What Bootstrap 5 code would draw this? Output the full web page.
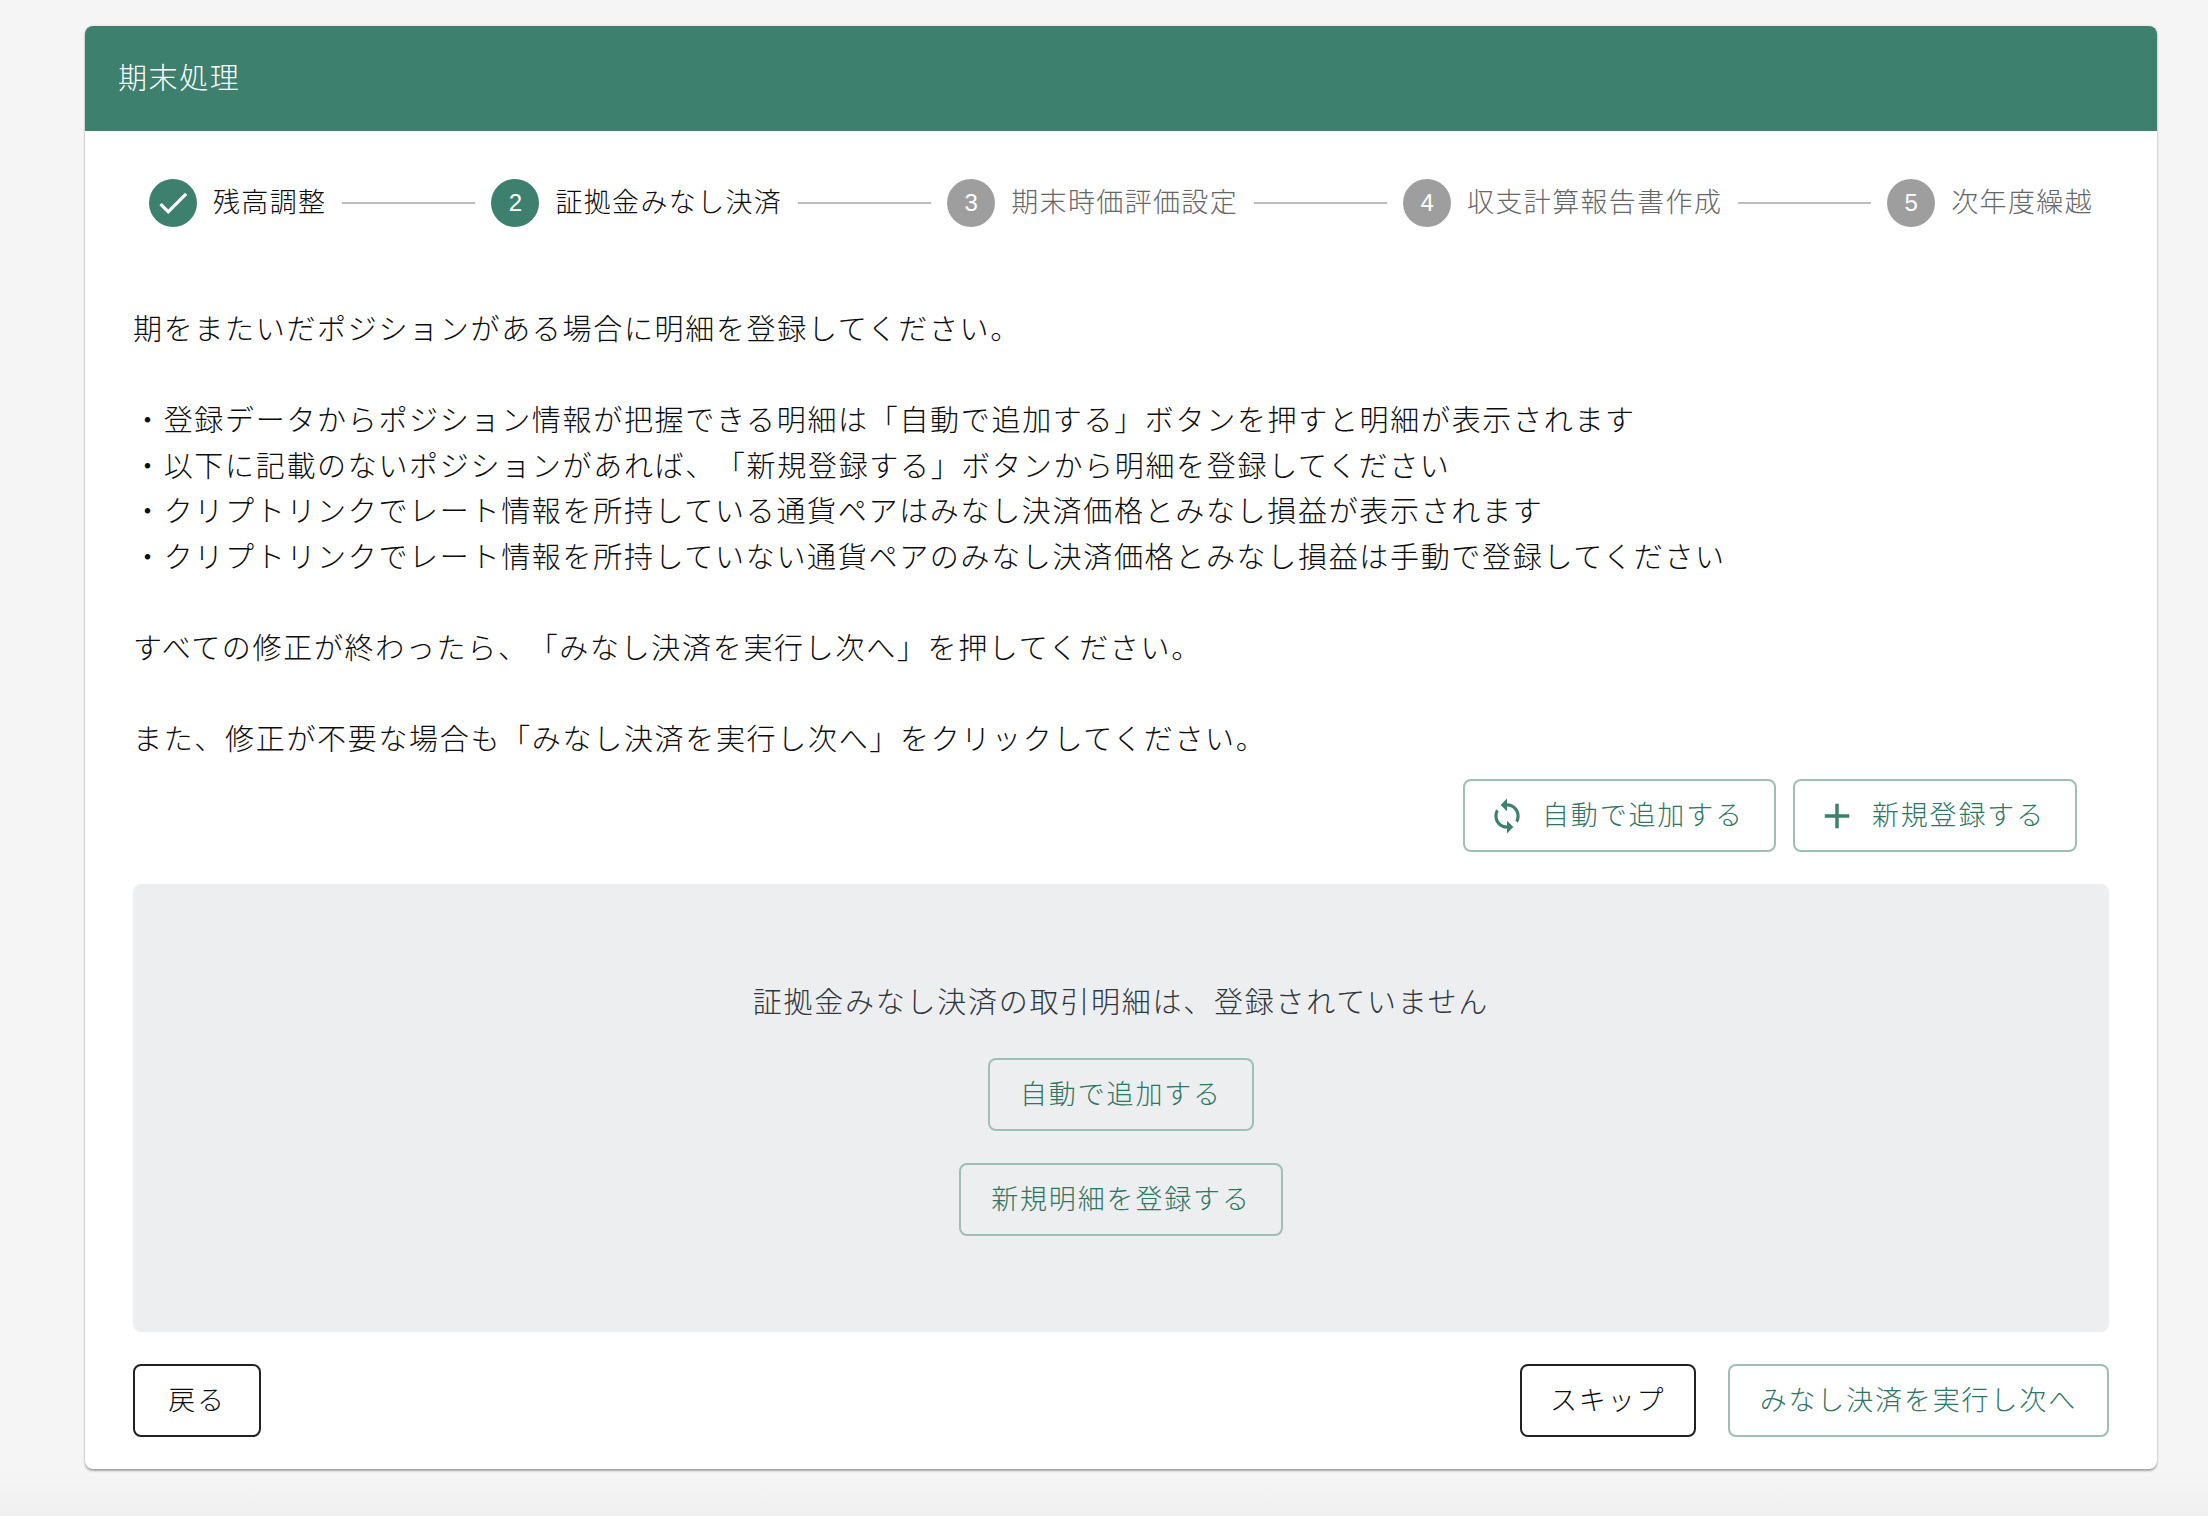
<!DOCTYPE html>
<html lang="ja">
<head>
<meta charset="utf-8">
<title>期末処理</title>
<link href="https://cdn.jsdelivr.net/npm/bootstrap@5.3.0/dist/css/bootstrap.min.css" rel="stylesheet">
<style>
:root { --main:#3d806d; --main-soft:#9ebfb6; }
html, body { height:100%; }
body { font-family:"Noto Sans CJK JP","Liberation Sans",sans-serif; font-weight:300; text-spacing-trim:space-all; background:linear-gradient(#f5f5f5 0, #f5f5f5 1470px, #f0f0f0 1516px); color:#0c0c0c; padding:26px 51px 0 85px; overflow:hidden; }
.sheet { background:#fff; border-radius:8px; box-shadow:0 2px 2px rgba(0,0,0,.3), 0 0 3px rgba(0,0,0,.12); height:1443px; overflow:hidden; }
.sheet-head { background:var(--main); color:#fff; height:105px; padding:0 0 4px 33px; font-size:29px; letter-spacing:1.6px; }
.sheet-main { padding:48px 48px 32px; }
.steps { padding:0 16px; height:48px; margin-bottom:78px; gap:16px; font-size:27px; letter-spacing:1.35px; }
.step-dot { width:48px; height:48px; border-radius:50%; background:#9e9e9e; color:#fff; font-size:24px; font-family:"Liberation Sans",sans-serif; letter-spacing:0; flex:none; }
.step-dot.on { background:var(--main); }
.step-text { color:#666; white-space:nowrap; padding-bottom:4px; }
.step-text.on { color:#0c0c0c; }
.step-line { flex:1 1 0; height:2px; background:#bdbdbd; }
.intro { font-size:29px; line-height:45.5px; letter-spacing:1.68px; margin:0 0 19px; white-space:nowrap; }
.act { height:73px; border-radius:8px; border:2px solid var(--main-soft); color:#2f7561; background:transparent; font-size:27px; font-weight:300; letter-spacing:1.85px; padding:0 30px 4px; line-height:1; white-space:nowrap; }
.act:hover { color:#2f7561; border-color:var(--main); background:transparent; }
.act.plain { border-color:#212121; color:#0c0c0c; }
.act svg { fill:var(--main); flex:none; }
.ic-sync { width:38px; height:38px; margin:0 1px; }
.ic-plus { width:42px; height:42px; margin:0 -1px; }
.act-icon { padding:0 30px 0 22px; gap:15px; }
.act-label { padding-bottom:4px; }
.top-acts { gap:17px; padding-right:32px; margin-bottom:32px; }
.empty-box { background:#edeef0; border-radius:8px; height:448px; padding-top:93px; color:#2f363c; font-size:29px; letter-spacing:1.75px; margin-bottom:32px; }
.empty-msg { line-height:46px; margin-bottom:35px; }
.empty-box .act { margin-bottom:32px; }
.foot-gap { gap:32px; }
.btn-back { width:128px; padding:0 0 4px; }
.btn-skip { width:176px; padding:0 0 4px; }
</style>
</head>
<body>
<div class="sheet">
  <div class="sheet-head d-flex align-items-center">期末処理</div>
  <div class="sheet-main">
    <div class="steps d-flex align-items-center">
      <span class="step-dot on d-flex align-items-center justify-content-center"><svg width="38" height="38" viewBox="0 0 24 24" fill="#fff"><path d="M9 16.17L4.83 12l-1.42 1.41L9 19 21 7l-1.41-1.41z"/></svg></span>
      <span class="step-text on">残高調整</span>
      <span class="step-line"></span>
      <span class="step-dot on d-flex align-items-center justify-content-center">2</span>
      <span class="step-text on">証拠金みなし決済</span>
      <span class="step-line"></span>
      <span class="step-dot d-flex align-items-center justify-content-center">3</span>
      <span class="step-text">期末時価評価設定</span>
      <span class="step-line"></span>
      <span class="step-dot d-flex align-items-center justify-content-center">4</span>
      <span class="step-text">収支計算報告書作成</span>
      <span class="step-line"></span>
      <span class="step-dot d-flex align-items-center justify-content-center">5</span>
      <span class="step-text">次年度繰越</span>
    </div>
    <p class="intro">期をまたいだポジションがある場合に明細を登録してください。<br><br>・登録データからポジション情報が把握できる明細は「自動で追加する」ボタンを押すと明細が表示されます<br>・以下に記載のないポジションがあれば、「新規登録する」ボタンから明細を登録してください<br>・クリプトリンクでレート情報を所持している通貨ペアはみなし決済価格とみなし損益が表示されます<br>・クリプトリンクでレート情報を所持していない通貨ペアのみなし決済価格とみなし損益は手動で登録してください<br><br>すべての修正が終わったら、「みなし決済を実行し次へ」を押してください。<br><br>また、修正が不要な場合も「みなし決済を実行し次へ」をクリックしてください。</p>
    <div class="top-acts d-flex justify-content-end">
      <button type="button" class="btn act act-icon d-flex align-items-center"><svg class="ic-sync" viewBox="0 0 24 24"><path d="M12 4V1L8 5l4 4V6c3.31 0 6 2.69 6 6 0 1.01-.25 1.97-.7 2.8l1.46 1.46C19.54 15.03 20 13.57 20 12c0-4.42-3.58-8-8-8zm0 14c-3.31 0-6-2.69-6-6 0-1.01.25-1.97.7-2.8L5.24 7.74C4.46 8.97 4 10.43 4 12c0 4.42 3.58 8 8 8v3l4-4-4-4v3z"/></svg><span class="act-label">自動で追加する</span></button>
      <button type="button" class="btn act act-icon d-flex align-items-center"><svg class="ic-plus" viewBox="0 0 24 24"><path d="M19 13h-6v6h-2v-6H5v-2h6V5h2v6h6v2z"/></svg><span class="act-label">新規登録する</span></button>
    </div>
    <div class="empty-box d-flex flex-column align-items-center">
      <div class="empty-msg">証拠金みなし決済の取引明細は、登録されていません</div>
      <button type="button" class="btn act">自動で追加する</button>
      <button type="button" class="btn act">新規明細を登録する</button>
    </div>
    <div class="d-flex justify-content-between">
      <button type="button" class="btn act plain btn-back">戻る</button>
      <div class="d-flex foot-gap">
        <button type="button" class="btn act plain btn-skip">スキップ</button>
        <button type="button" class="btn act">みなし決済を実行し次へ</button>
      </div>
    </div>
  </div>
</div>
</body>
</html>
